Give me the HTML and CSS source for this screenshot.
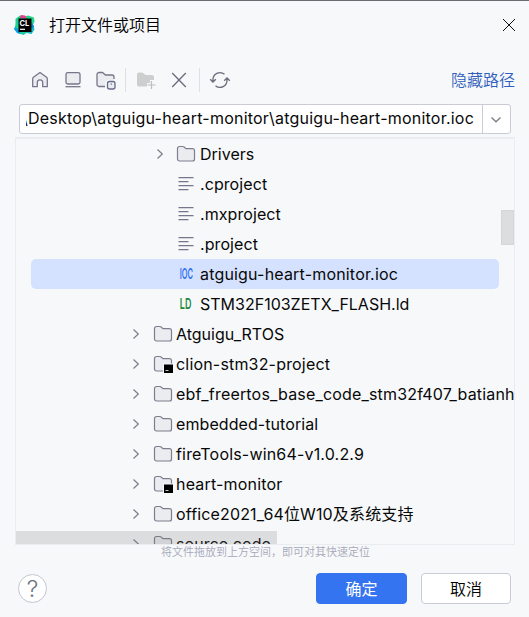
FILE: index.html
```html
<!DOCTYPE html>
<html lang="zh-CN">
<head>
<meta charset="utf-8">
<title>打开文件或项目</title>
<link rel="stylesheet" href="styles.css">
</head>
<body>
<svg class="defs" width="0" height="0">
  <symbol id="folder" viewBox="0 0 20 18"><path d="M1.500 3.500a2 2 0 0 1 2-2h3.300a2 2 0 0 1 1.300.5L10 3.700h6.500a2 2 0 0 1 2 2v8.300a2 2 0 0 1-2 2h-13a2 2 0 0 1-2-2z" fill="#ebecf0" stroke="#7d7e8e" stroke-width="1.200"/></symbol>
  <symbol id="module" viewBox="0 0 20 18"><use href="#folder" width="20" height="18"/><path d="M10 8.500h10V18H10z" fill="#f7f8fa"/><path d="M11 9.500h9V18h-9z" fill="#000"/><path d="M12.500 15.500h3" stroke="#fff" stroke-width=".8"/></symbol>
  <symbol id="chev" viewBox="0 0 10 12"><path d="M2.500 1.500 7.300 6 2.500 10.500" fill="none" stroke="#7d7e8c" stroke-width="1.200"/></symbol>
  <symbol id="text" viewBox="0 0 20 18"><path d="M2.500 2.700h15M2.500 6.700h10M2.500 10.700h15M2.500 14.700h10" stroke="#74768a" stroke-width="1.300"/></symbol>
</svg>
<div class="dialog">
  <header class="title">
    <svg class="logo" width="22" height="22" viewBox="0 0 22 22">
      <defs><linearGradient id="lg" x1="0" y1="0" x2="1" y2="1"><stop offset="0" stop-color="#19c98b"/><stop offset=".55" stop-color="#20dc86"/><stop offset="1" stop-color="#12a8e8"/></linearGradient></defs>
      <path d="M1.500 5 6 1.500l5 1 3-1 6 2 .5 4-1.500 3 1.500 5-3 4.500-5-1-3 2-6-2-3-4 1-5z" fill="url(#lg)"/>
      <path d="M1 13l3 2 3 5-4-1-3-4z" fill="#0b9bea"/><path d="M7 1l4 .5 2 3H6z" fill="#ec3a8b"/><path d="M18 9l2 3-1 3-2-2z" fill="#0789dd"/>
      <path d="M4.500 4.500H17.500v13.500H4.500z" fill="#000"/>
      <text x="5.500" y="11.500" class="logo-text">CL</text><path d="M6 15.300h5" stroke="#fff" stroke-width="1.200"/>
    </svg>
    <h1>打开文件或项目</h1>
    <svg class="close" width="14" height="14" viewBox="0 0 14 14"><path d="M1 1l12 12M13 1 1 13" stroke="#111" stroke-width="1"/></svg>
  </header>
  <nav class="toolbar">
    <svg width="20" height="20" viewBox="0 0 20 20"><path d="M2.700 8.800a2 2 0 0 1 .7-1.500L10 2.500l6.600 4.800a2 2 0 0 1 .7 1.500v7.900h-4.600v-4.200a2.700 2.700 0 0 0-5.400 0v4.200H2.700z" fill="#ebecf0" stroke="#74768a" stroke-width="1.300" stroke-linejoin="round"/></svg>
    <svg class="desktop" width="20" height="20" viewBox="0 0 20 20"><rect x="3" y="2.600" width="14" height="11.400" rx="1.800" fill="#ebecf0" stroke="#74768a" stroke-width="1.300"/><path d="M2.500 16.700h15" stroke="#74768a" stroke-width="1.300"/></svg>
    <svg class="project" width="22" height="20" viewBox="0 0 22 20"><path d="M10 16.500H4a2 2 0 0 1-2-2v-10a2 2 0 0 1 2-2h3.500L10.500 5H17a2 2 0 0 1 2 2v3h-7l-2 2z" fill="#ebecf0"/><path d="M10 16.500H4a2 2 0 0 1-2-2v-10a2 2 0 0 1 2-2h3.500L10.500 5H17a2 2 0 0 1 2 2v2" fill="none" stroke="#74768a" stroke-width="1.300"/><rect x="12.500" y="11.500" width="7.500" height="7.500" rx="2" fill="#ebecf0" stroke="#666c8c" stroke-width="1.300"/><path d="M15.700 13.600h1.200v1.200h-1.200z" fill="#616b96"/></svg>
    <i class="sep"></i>
    <svg class="new" width="23" height="20" viewBox="0 0 23 20"><path d="M2 4.500a2 2 0 0 1 2-2h3.500L10.500 5H17a2 2 0 0 1 2 2v3h-4v3h-3v3.500H4a2 2 0 0 1-2-2z" fill="#cecece"/><path d="M16.500 11v8M12.500 15h8" stroke="#bdbdbd" stroke-width="1.200"/></svg>
    <svg class="delete" width="20" height="20" viewBox="0 0 20 20"><path d="m3.200 3 13.600 14M16.800 3 3.200 17" stroke="#696b7b" stroke-width="1.300"/></svg>
    <i class="sep"></i>
    <svg class="refresh" width="22" height="20" viewBox="0 0 22 20"><path d="M4 12V10a7 7 0 0 1 11.500-5.700M18 8v2a7 7 0 0 1-11.500 5.700M1.200 9.200 4 12l2.800-2.800M15.200 10.800 18 8l2.800 2.800" fill="none" stroke="#696b7b" stroke-width="1.300"/></svg>
    <a class="link">隐藏路径</a>
  </nav>
  <div class="path">
    <div class="path-text"><span>\Desktop\atguigu-heart-monitor\atguigu-heart-monitor.ioc</span></div>
    <div class="drop"><svg width="12" height="8" viewBox="0 0 12 8"><path d="m1.500 1.500 4.500 4.300 4.500-4.300" fill="none" stroke="#7b7d8b" stroke-width="1.300"/></svg></div>
  </div>
  <main class="tree">
    <ul>
      <li class="deep"><svg class="chev"><use href="#chev"/></svg><svg class="icon"><use href="#folder"/></svg><span>Drivers</span></li>
      <li class="deep"><i class="chev"></i><svg class="icon"><use href="#text"/></svg><span class="loose">.cproject</span></li>
      <li class="deep"><i class="chev"></i><svg class="icon"><use href="#text"/></svg><span class="loose">.mxproject</span></li>
      <li class="deep"><i class="chev"></i><svg class="icon"><use href="#text"/></svg><span class="loose">.project</span></li>
      <li class="deep selected"><i class="chev"></i><b class="icon ioc"><em>IOC</em></b><span class="wide">atguigu-heart-monitor.ioc</span></li>
      <li class="deep"><i class="chev"></i><b class="icon ld"><em>LD</em></b><span>STM32F103ZETX_FLASH.ld</span></li>
      <li><svg class="chev"><use href="#chev"/></svg><svg class="icon"><use href="#folder"/></svg><span>Atguigu_RTOS</span></li>
      <li><svg class="chev"><use href="#chev"/></svg><svg class="icon"><use href="#module"/></svg><span class="wide">clion-stm32-project</span></li>
      <li><svg class="chev"><use href="#chev"/></svg><svg class="icon"><use href="#folder"/></svg><span class="wide">ebf_freertos_base_code_stm32f407_batianh</span></li>
      <li><svg class="chev"><use href="#chev"/></svg><svg class="icon"><use href="#folder"/></svg><span class="loose">embedded-tutorial</span></li>
      <li><svg class="chev"><use href="#chev"/></svg><svg class="icon"><use href="#folder"/></svg><span class="wide">fireTools-win64-v1.0.2.9</span></li>
      <li><svg class="chev"><use href="#chev"/></svg><svg class="icon"><use href="#module"/></svg><span class="wide">heart-monitor</span></li>
      <li><svg class="chev"><use href="#chev"/></svg><svg class="icon"><use href="#folder"/></svg><span class="mixed">office2021_64位W10及系统支持</span></li>
      <li><svg class="chev"><use href="#chev"/></svg><svg class="icon"><use href="#folder"/></svg><span class="loose">source code</span></li>
    </ul>
    <div class="vbar"></div>
    <div class="hbar"></div>
  </main>
  <p class="hint">将文件拖放到上方空间，即可对其快速定位</p>
  <footer>
    <button class="help">?</button>
    <button class="btn primary">确定</button>
    <button class="btn">取消</button>
  </footer>
</div>
</body>
</html>
```
FILE: styles.css
```css
* { box-sizing: border-box; }
body {
  margin: 0;
  background: #f7f8fa;
  color: #080808;
  font: 16px/30px Inter, "Noto Sans CJK SC", sans-serif;
}
svg { display: block; flex: none; }
.defs { position: absolute; }
.dialog {
  width: 529px;
  height: 617px;
  display: flex;
  flex-direction: column;
  overflow: hidden;
  border-top: 1px solid #6b6b70;
}
.title { height: 48px; flex: none; display: flex; align-items: center; padding: 0 13px 0 14px; }
.title h1 { flex: 1; margin: 0 0 0 13px; font-size: 16px; font-weight: 350; line-height: 24px; color: #000; }
.logo-text { font: 700 7.5px Inter, sans-serif; fill: #fff; }
.toolbar { height: 54px; flex: none; display: flex; align-items: center; padding: 8px 14px 0 30px; }
.desktop { margin-left: 13px; }
.project { margin-left: 12px; }
.sep { width: 1px; height: 24px; background: #dfe0e5; margin-left: 8px; }
.new { margin-left: 9px; }
.delete { margin-left: 11px; }
.delete + .sep { margin-left: 10px; }
.refresh { margin-left: 9px; }
.link { margin-left: auto; color: #315fbd; font-weight: 350; }
.path {
  height: 30px;
  flex: none;
  margin: 1px 18px 0 19px;
  display: flex;
  background: #fff;
  border: 1px solid #c9ccd6;
  border-radius: 3px;
}
.path-text { flex: 1; min-width: 0; margin: 0 8px 0 6px; overflow: hidden; display: flex; justify-content: flex-end; line-height: 27px; letter-spacing: .215px; white-space: nowrap; }
.drop { width: 28px; border-left: 1px solid #c9ccd6; display: flex; align-items: center; justify-content: center; padding: 2px 2px 0 0; }
.tree {
  position: relative;
  height: 408px;
  flex: none;
  margin: 3px 14px 0 15px;
  border: 1px solid #ebecf0;
  border-top-width: 2px;
  overflow: hidden;
}
ul { list-style: none; margin: 0; padding: 0 15px; }
li { height: 30px; display: flex; align-items: center; padding-left: 100px; border-radius: 5px; white-space: nowrap; }
li.deep { padding-left: 124px; }
li.selected { background: #d4e2ff; }
.loose { letter-spacing: .08px; }
.wide { letter-spacing: .18px; }
.mixed { letter-spacing: .14px; }
.chev { width: 10px; height: 12px; flex: none; }
.icon { width: 20px; height: 18px; flex: none; margin: 0 3px 0 12px; }
.deep .icon { margin: 0 4px 0 11px; }
.ioc, .ld { display: flex; align-items: center; justify-content: center; font: 600 15px/18px Inter, sans-serif; }
.icon em { font-style: normal; transform: scaleX(.5); }
.ioc { color: #3574f0; }
.ld { color: #208a3c; }
.icon.ld em { transform: scaleX(.6); }
.vbar { position: absolute; right: 0; top: 71px; width: 13px; height: 35px; background: rgba(115, 115, 115, .2); border: 1px solid #d6d6d8; }
.hbar { position: absolute; left: 0; bottom: 0; width: 261px; height: 13px; background: rgba(115, 115, 115, .2); }
.hint { margin: 0; width: 529px; padding-left: 2px; text-align: center; font-size: 11px; line-height: 14px; font-weight: 350; color: #a5a9b9; }
footer { display: flex; align-items: center; padding: 14px 18px 0; }
button { padding: 0; font: 16px/28px Inter, "Noto Sans CJK SC", sans-serif; }
.help { width: 29px; height: 29px; margin-right: auto; border: 1px solid #c3c5d2; border-radius: 50%; background: #fff; color: #6c707e; font-size: 23px; font-weight: 300; line-height: 26px; }
.btn { width: 90px; height: 31px; margin-left: 14px; border: 1px solid #c9ccd6; border-radius: 4px; background: #fff; color: #000; font-weight: 350; }
.btn.primary { width: 91px; border-color: #3574f0; background: #3574f0; color: #fff; font-weight: 400; }
```
